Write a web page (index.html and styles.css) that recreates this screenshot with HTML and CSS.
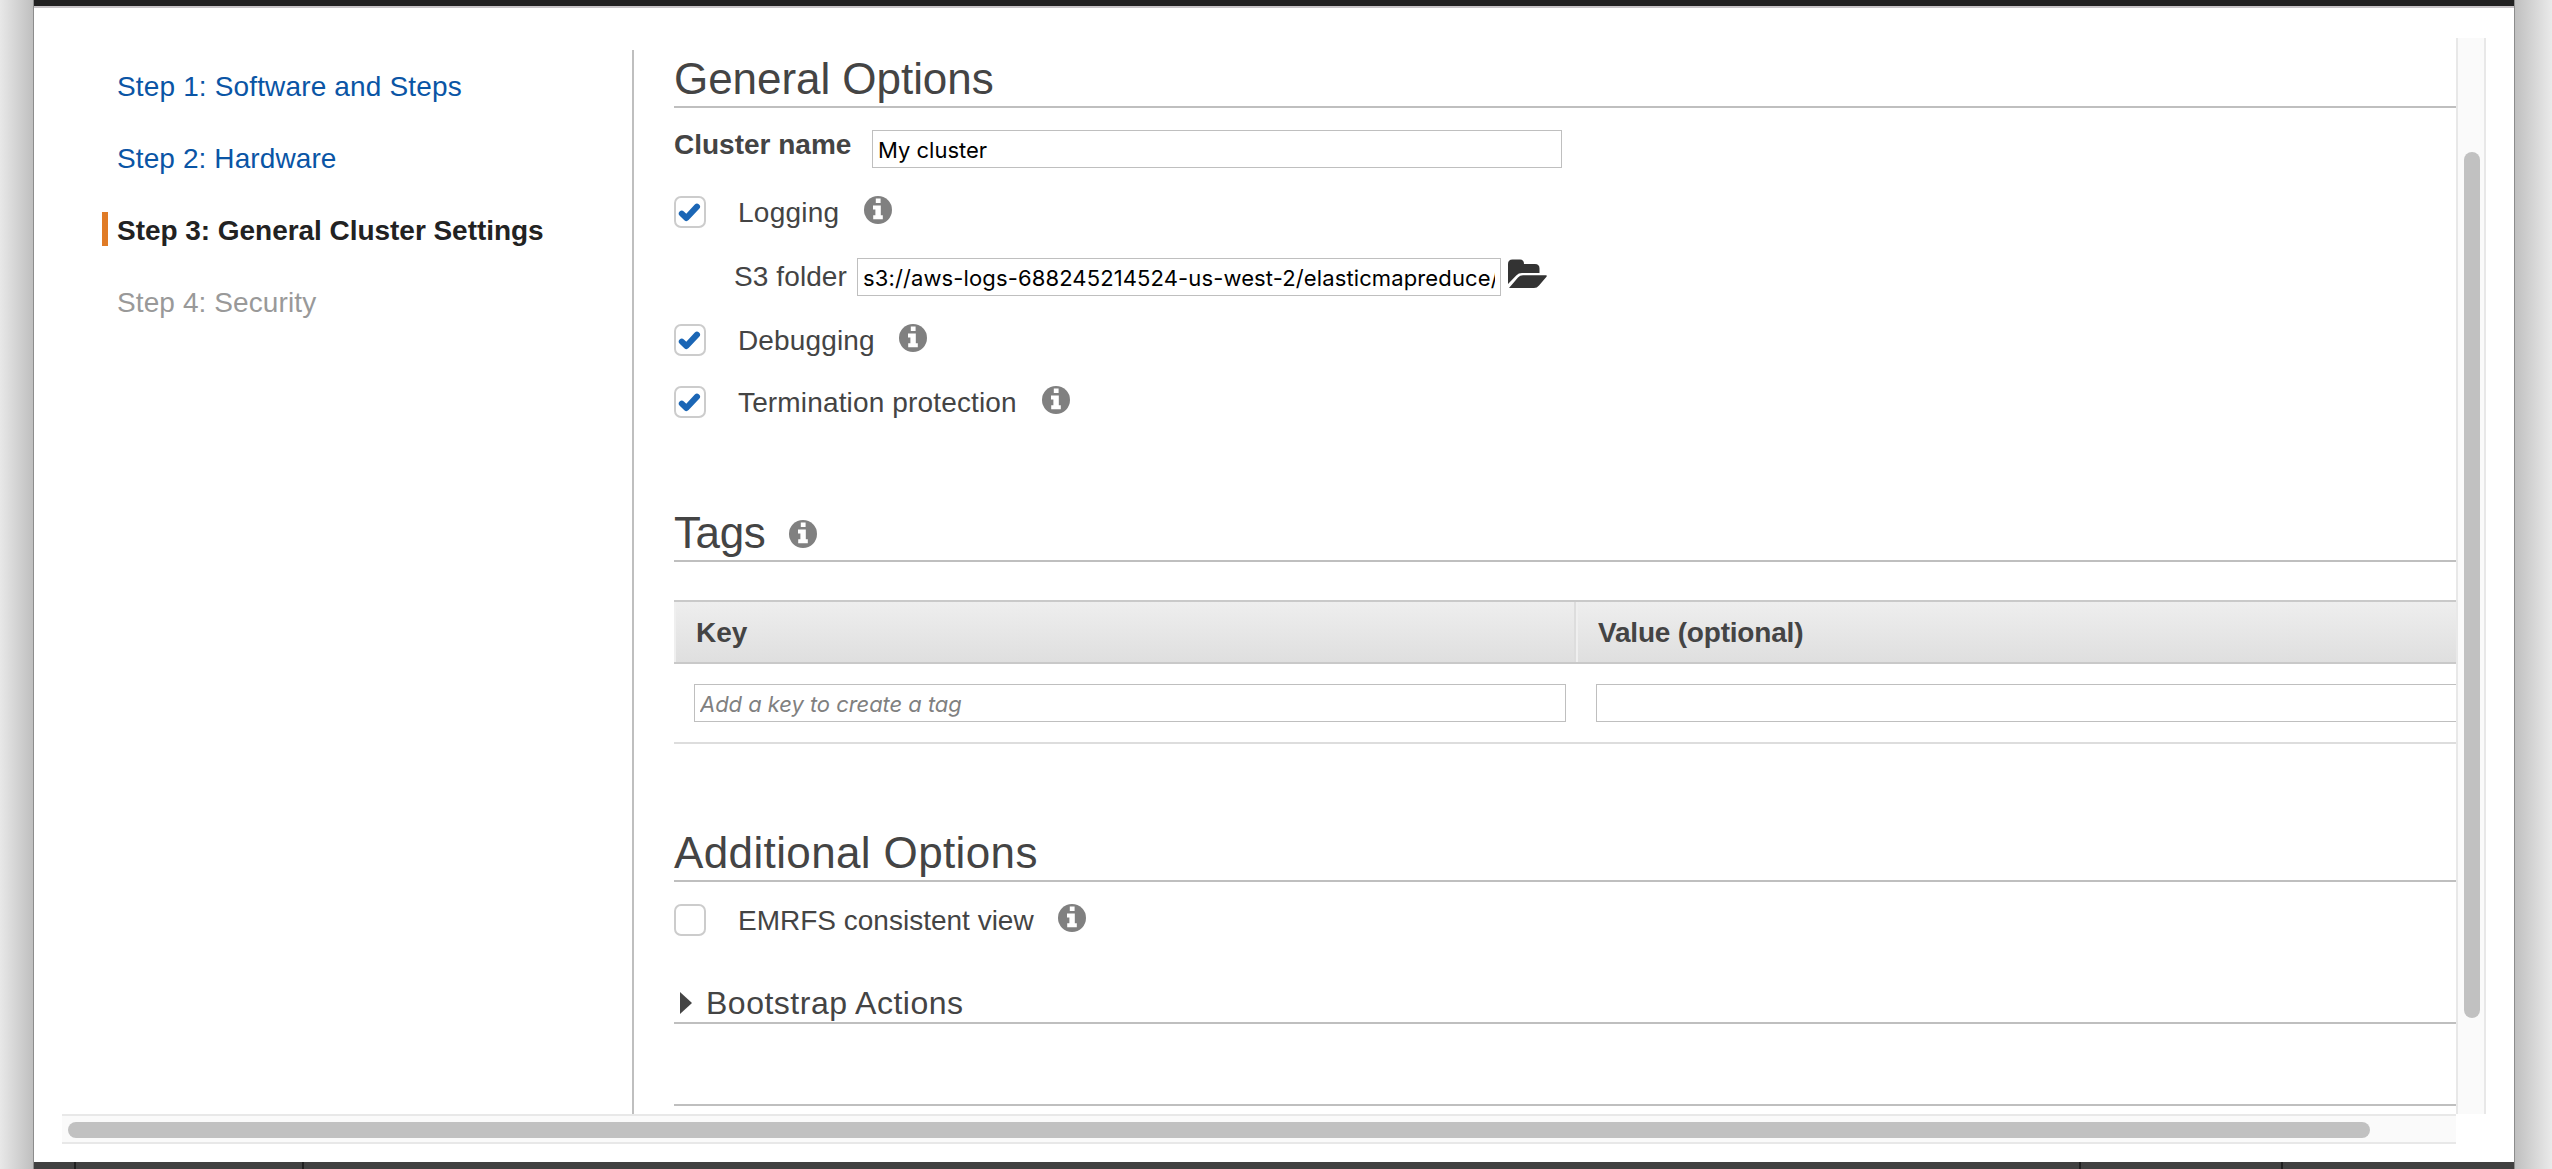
FILE: index.html
```html
<!DOCTYPE html>
<html lang="en">
<head>
<meta charset="utf-8">
<title>Create Cluster</title>
<link rel="stylesheet" href="styles.css">
</head>
<body>
<svg width="0" height="0" class="defs" aria-hidden="true">
  <symbol id="info" viewBox="0 0 28 28">
    <circle cx="14" cy="14" r="14" fill="#808080"/>
    <path fill="#fff" d="M11.800 2.600h4.800v4.400h-4.800zM9 9.600h7.800v9.600h2V23.200H9.200v-4h2.200v-5.800H9z"/>
  </symbol>
  <symbol id="check" viewBox="0 0 28 28">
    <path d="M5.800 15.600 L10.400 20 L21 8.600" fill="none" stroke="#1b66b5" stroke-width="6" stroke-linecap="round" stroke-linejoin="round"/>
  </symbol>
</svg>
<div class="window">
  <div class="topbar"></div>
  <div class="viewport">
    <div class="pane">
      <nav class="steps">
        <a class="step s1">Step 1: Software and Steps</a>
        <a class="step s2">Step 2: Hardware</a>
        <a class="step current">Step 3: General Cluster Settings</a>
        <a class="step disabled">Step 4: Security</a>
      </nav>
      <main class="content">
        <h1 class="heading"><span class="t-general">General Options</span></h1>
        <div class="row name-row">
          <b class="t-name">Cluster name</b>
          <div class="field name-field"><span class="f-name">My cluster</span></div>
        </div>
        <div class="row check-row logging">
          <span class="box"><svg><use href="#check"/></svg></span><span class="label">Logging</span><svg class="info"><use href="#info"/></svg>
        </div>
        <div class="row s3-row">
          <span class="t-s3">S3 folder</span>
          <div class="field s3-field"><span class="f-s3">s3://aws-logs-688245214524-us-west-2/elasticmapreduce/</span></div>
          <svg class="folder" viewBox="0 0 39 29"><path fill="#333" d="M0 25V5Q0 .5 4.500 .5H12Q16 .5 16 5H27Q31.500 5 31.500 9.500V14H14Q10.500 14 8.500 16.300Z"/><path fill="#333" d="M1 29L10 18.500Q12 16.300 15 16.300H38Q39.300 16.300 38.500 17.800L31 26.500Q29 29 26 29Z"/></svg>
        </div>
        <div class="row check-row debugging">
          <span class="box"><svg><use href="#check"/></svg></span><span class="label">Debugging</span><svg class="info"><use href="#info"/></svg>
        </div>
        <div class="row check-row termination">
          <span class="box"><svg><use href="#check"/></svg></span><span class="label">Termination protection</span><svg class="info"><use href="#info"/></svg>
        </div>
        <h1 class="heading tags-heading"><span class="t-tags">Tags</span><svg class="info"><use href="#info"/></svg></h1>
        <div class="table">
          <div class="thead"><b class="th">Key</b><b class="th t-value">Value (optional)</b></div>
          <div class="trow">
            <div class="field key-field"><span class="f-key">Add a key to create a tag</span></div>
            <div class="field value-field"></div>
          </div>
        </div>
        <h1 class="heading additional"><span>Additional Options</span></h1>
        <div class="row check-row emrfs">
          <span class="box"></span><span class="label">EMRFS consistent view</span><svg class="info"><use href="#info"/></svg>
        </div>
        <h2 class="subheading"><svg class="arrow" viewBox="0 0 12 22"><path fill="#444" d="M0 0L12 11L0 22Z"/></svg><span>Bootstrap Actions</span></h2>
        <div class="rule"></div>
      </main>
    </div>
    <div class="vbar"><div class="vthumb"></div></div>
    <div class="hbar"><div class="hthumb"></div></div>
  </div>
  <footer class="bottombar"><i></i><i></i><i></i><i></i></footer>
</div>
</body>
</html>
```

FILE: styles.css
```css
* { box-sizing: border-box; }
body {
  margin: 0;
  width: 2552px;
  height: 1169px;
  overflow: hidden;
  display: grid;
  grid-template-columns: 33px 2482px 37px;
  background:
    linear-gradient(to right, #e8e8e8, #bfbfbf) left / 33px 100% no-repeat,
    linear-gradient(to right, #c0c0c0, #eaeaea) right / 37px 100% no-repeat;
  font-family: "Liberation Sans", Arial, sans-serif;
  font-size: 28px;
  color: #444;
  white-space: nowrap;
}
.defs { position: absolute; }
h1, h2 { margin: 0; font-weight: normal; }

.window {
  grid-column: 2;
  height: 1169px;
  display: flex;
  flex-direction: column;
  background: #fff;
  border: solid #8c8c8c;
  border-width: 0 1px;
}
.topbar { height: 8px; background: #222; border-bottom: 2px solid #c9c5c8; }
.viewport {
  height: 1106px;
  margin: 30px 0 18px 28px;
  width: 2424px;
  display: grid;
  grid-template: 1076px 30px / 2394px 30px;
}
.bottombar {
  height: 7px;
  background: #404040;
  display: grid;
  grid-template-columns: 42px 228px 1777px 202px;
}
.bottombar i { border-right: 2px solid #1f1f1f; }

/* scrollbars */
.vbar { background: #fafafa; border: solid #e8e8e8; border-width: 0 2px; padding: 114px 6px 0; }
.vthumb { height: 866px; width: 16px; border-radius: 8px; background: #c1c1c1; }
.hbar { background: #fafafa; border: solid #e8e8e8; border-width: 2px 0; padding: 6px 0 0 6px; }
.hthumb { height: 16px; width: 2302px; border-radius: 8px; background: #c1c1c1; }

.pane { display: flex; overflow: hidden; }
.steps {
  width: 572px;
  margin-top: 12px;
  padding-top: 18px;
  border-right: 2px solid #bfbfbf;
  display: flex;
  flex-direction: column;
  gap: 38px;
  padding-left: 40px;
  flex: none;
}
/* links wrap the label in a 34px box whose text sits slightly low */
.step { height: 34px; line-height: 37px; padding-left: 15px; color: #0a55a5; letter-spacing: .1px; }
.s1 { letter-spacing: .15px; }
.step.current { border-left: 6px solid #e07b26; padding-left: 9px; font-weight: bold; color: #222; letter-spacing: -.04px; }
.step.disabled { color: #999; }

.content { margin-left: 40px; width: 1900px; flex: none; display: flex; flex-direction: column; }
.heading {
  height: 70px;
  border-bottom: 2px solid #bfbfbf;
  font-size: 44px;
  line-height: 50px;
  padding-top: 16px;
  display: flex;
}
.t-general { letter-spacing: -.05px; }
.row { display: flex; flex: none; }
.name-row { margin-top: 22px; height: 38px; line-height: 30px; }
.t-name { width: 198px; }
.field {
  height: 38px;
  border: 1px solid #bfbfbf;
  padding: 0 5px;
  font: 22px/38px Inter, sans-serif;
  color: #000;
  background: #fff;
  overflow: hidden;
}
.name-field { width: 690px; }
.field span { display: block; width: 100%; overflow: hidden; }
.check-row { height: 32px; }
.box { width: 32px; height: 32px; border: 2px solid #ccc; border-radius: 7px; margin-right: 32px; }
.box svg { display: block; width: 28px; height: 28px; }
.label { line-height: 34px; flex: none; letter-spacing: .15px; }
.info { width: 28px; height: 28px; flex: none; }
.logging { margin-top: 28px; }
.logging .label { width: 126px; letter-spacing: .25px; }
.s3-row { margin-top: 30px; padding-left: 60px; height: 38px; line-height: 38px; }
.t-s3 { width: 123px; letter-spacing: .1px; }
.s3-field { width: 644px; }
.f-s3 { letter-spacing: .12px; }
.folder { width: 39px; height: 29px; margin: 1px 0 0 7px; }
.debugging { margin-top: 28px; }
.debugging .label { width: 161px; }
.termination { margin-top: 30px; }
.termination .label { width: 304px; }
.tags-heading { margin-top: 74px; }
.tags-heading .info { margin: 12px 0 0; }
.t-tags { width: 115px; letter-spacing: -.4px; }

.table { margin-top: 38px; }
.thead {
  height: 64px;
  display: grid;
  grid-template-columns: 902px 998px;
  border: solid #c9c9c9;
  border-width: 2px 0;
  background: linear-gradient(#eee, #dfdfdf);
  line-height: 62px;
}
.th { border-left: 2px solid #efefef; padding-left: 20px; border-right: 2px solid #ddd; height: 60px; }
.t-value { letter-spacing: -.2px; }
.trow { display: flex; padding: 20px 0 20px 20px; height: 80px; border-bottom: 2px solid #ddd; }
.key-field { width: 872px; margin-right: 30px; }
.f-key { color: #808080; font-style: italic; letter-spacing: -.05px; }
.value-field { width: 976px; }

.additional { margin-top: 68px; letter-spacing: .37px; }
.emrfs { margin-top: 22px; }
.emrfs .label { width: 320px; letter-spacing: 0; }
.subheading {
  margin-top: 48px;
  height: 40px;
  border-bottom: 2px solid #bfbfbf;
  font-size: 32px;
  line-height: 38px;
  letter-spacing: .5px;
  display: flex;
}
.arrow { width: 12px; height: 22px; margin: 8px 14px 0 6px; }
.rule { height: 82px; border-bottom: 2px solid #bfbfbf; }
```
